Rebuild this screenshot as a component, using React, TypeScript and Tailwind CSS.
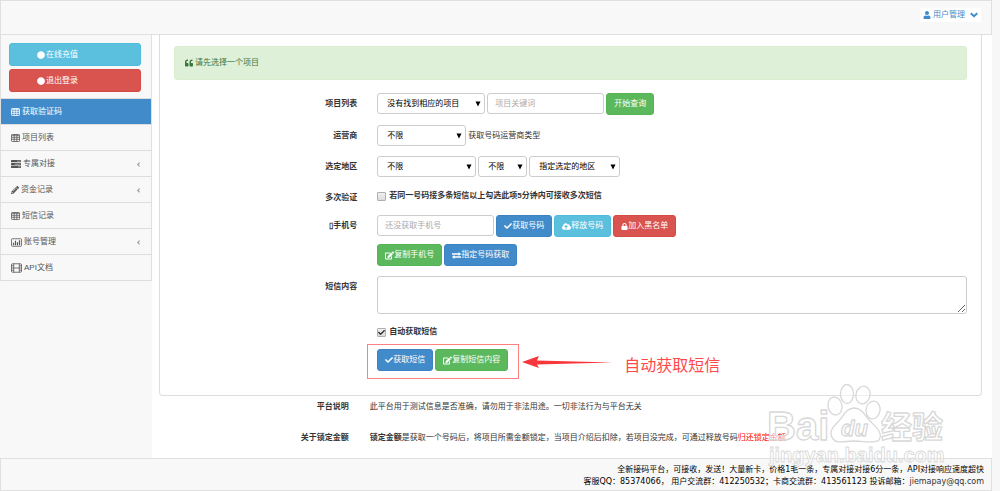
import type { ReactNode } from 'react';
import {
  FaAngleLeft,
  FaCheck,
  FaCircle,
  FaCloudUploadAlt,
  FaEdit,
  FaLock,
  FaPencilAlt,
  FaQuoteLeft,
  FaUser,
} from 'react-icons/fa';

const TableIcon = () => (
  <svg viewBox="0 0 18 16" className="h-2 w-[9px]" fill="none" stroke="currentColor" strokeWidth="1.6">
    <rect x="1" y="1" width="16" height="14" rx="1.5" />
    <path d="M1 2.5h16M1 6.5h16M1 10.5h16M6.3 2v13M11.7 2v13" />
  </svg>
);

const TasksIcon = () => (
  <svg viewBox="0 0 20 16" className="h-2 w-[10px]" fill="currentColor">
    <rect width="20" height="4.5" rx="1" />
    <rect y="5.8" width="20" height="4.5" rx="1" />
    <rect y="11.5" width="20" height="4.5" rx="1" />
    <path d="M12 1.5h6.5v1.5H12zM8 7.3h10.5v1.5H8zM14 13h4.5v1.5H14z" fill="#bbb" />
  </svg>
);

const ChartIcon = () => (
  <svg viewBox="0 0 22 17" className="h-[9px] w-[11px]" fill="none" stroke="currentColor">
    <rect x="1" y="1" width="20" height="15" rx="1.5" strokeWidth="1.6" />
    <path d="M5 14V9M9 14V5M13 14V8M17 14V4" strokeWidth="2.4" />
  </svg>
);

const FilmIcon = () => (
  <svg viewBox="0 0 22 19" className="h-[10px] w-[11px]" fill="none" stroke="currentColor" strokeWidth="1.6">
    <rect x="1" y="1" width="20" height="17" rx="2" />
    <path d="M5.5 1v17M16.5 1v17M5.5 9.5h11M1 5h4.5M1 9.5h4.5M1 14h4.5M16.5 5H21M16.5 9.5H21M16.5 14H21" />
  </svg>
);

const ExchangeIcon = () => (
  <svg viewBox="0 0 18 14" className="h-[7px] w-[9px]" fill="currentColor">
    <path d="M0 2.500h13V0l5 4-5 4V5.500H0zM18 8.500H5V6L0 10l5 4v-2.500h13z" />
  </svg>
);

const ChevronIcon = () => (
  <svg viewBox="0 0 16 12" className="ml-[3px] h-[6px] w-2" fill="none" stroke="currentColor" strokeWidth="4">
    <path d="M1.500 2.500 8 8.500l6.500-6" />
  </svg>
);

const navItems: { label: string; icon: ReactNode; active?: boolean; sub?: boolean }[] = [
  { label: '获取验证码', icon: <TableIcon />, active: true },
  { label: '项目列表', icon: <TableIcon /> },
  { label: '专属对接', icon: <TasksIcon />, sub: true },
  { label: '资金记录', icon: <FaPencilAlt className="size-2" />, sub: true },
  { label: '短信记录', icon: <TableIcon /> },
  { label: '账号管理', icon: <ChartIcon />, sub: true },
  { label: 'API文档', icon: <FilmIcon /> },
];

const tones = {
  primary: 'bg-[#428bca] border-[#3b83c2]',
  info: 'bg-[#5bc0de] border-[#50bcdc]',
  danger: 'bg-[#d9534f] border-[#d64a45]',
  success: 'bg-[#5cb85c] border-[#54b354]',
};

const Button = ({ tone, children }: { tone: keyof typeof tones; children: ReactNode }) => (
  <button type="button" className={`flex h-[22px] items-center rounded-[3px] border px-[7px] text-white ${tones[tone]}`}>
    {children}
  </button>
);

const SideButton = ({ tone, children }: { tone: keyof typeof tones; children: ReactNode }) => (
  <button type="button" className={`flex h-[23px] w-full items-center gap-px rounded-[3px] border pl-[27px] text-white ${tones[tone]}`}>
    <FaCircle className="size-2" />
    {children}
  </button>
);

const Select = ({ id, label, value, width }: { id?: string; label?: string; value: string; width: string }) => (
  <div className={`relative ${width}`}>
    <select id={id} aria-label={label} className="h-[21px] w-full appearance-none rounded-[3px] border border-[#ccc] bg-white pl-[9px] text-black">
      <option>{value}</option>
    </select>
    <svg viewBox="0 0 6 6" className="pointer-events-none absolute top-2 right-1 size-[6px]">
      <path d="M.5.500h5L3 5.500z" fill="#000" />
    </svg>
  </div>
);

const Checkbox = ({ label, checked }: { label: string; checked?: boolean }) => (
  <label className="flex items-center gap-[3px] font-bold">
    <span className="relative size-[9px]">
      <input
        type="checkbox"
        defaultChecked={checked}
        className="peer block size-[9px] appearance-none rounded-[1px] border border-[#b0b0b0] bg-gradient-to-b from-[#f0f0f0] to-[#dcdcdc]"
      />
      <FaCheck className="pointer-events-none absolute top-px left-px hidden size-[7px] text-[#333] peer-checked:block" />
    </span>
    {label}
  </label>
);

const Row = ({ label, htmlFor, children }: { label?: ReactNode; htmlFor?: string; children: ReactNode }) => (
  <div className="-mx-2 flex">
    <div className="w-1/4 pt-[5px] pr-[11px] text-right font-bold">{label && <label htmlFor={htmlFor}>{label}</label>}</div>
    <div className="w-3/4 pr-2 pl-[9px]">{children}</div>
  </div>
);

const Watermark = () => (
  <svg
    viewBox="0 0 190 90"
    className="pointer-events-none absolute right-[50px] bottom-[21px] h-[90px] w-[190px]"
    fill="#fff"
    stroke="#d8d8d8"
    strokeWidth="1.3"
    strokeLinejoin="round"
    fontFamily='"Liberation Sans", "Noto Sans CJK SC", sans-serif'
    fontWeight="700"
  >
    <g fillOpacity=".55">
      <text x="7" y="60" fontSize="40">Bai</text>
      <ellipse cx="75" cy="26" rx="7" ry="9" transform="rotate(-12 75 26)" />
      <ellipse cx="87" cy="14" rx="6.5" ry="9.500" />
      <ellipse cx="103" cy="15" rx="7" ry="9" transform="rotate(14 103 15)" />
      <ellipse cx="113" cy="30" rx="7" ry="9" transform="rotate(10 113 30)" />
      <path d="M94 28c8 0 11 8 17 14s12 11 8 18c-4 4-15 1-25 1s-17 3-21-2c-5-7 0-12 5-17s8-14 16-14z" />
      <text x="81" y="56" fontSize="22" fontStyle="italic">du</text>
      <text x="121" y="58" fontSize="31">经验</text>
      <text x="9" y="82" fontSize="20" strokeWidth=".8">jingyan.baidu.com</text>
    </g>
  </svg>
);

export default function App() {
  return (
    <div className="relative flex min-h-screen bg-[#f7f7f7] pr-2 font-['Liberation_Sans','Noto_Sans_CJK_SC',sans-serif] text-[8px] leading-3 text-[#333]">
      <div className="flex flex-1 flex-col bg-white">
        <header className="flex h-[35px] items-start justify-end border border-[#e0e0e0] bg-[#f8f8f8] pt-[7px] pr-[10px]">
          <a href="#user" className="flex h-[14px] items-center gap-[2px] bg-white px-[3px] text-[#428bca]">
            <FaUser className="size-2" />
            用户管理
            <ChevronIcon />
          </a>
        </header>

        <div className="flex flex-1">
          <aside className="w-[152px] shrink-0 bg-[#f8f8f8]">
            <div className="border-x border-[#e0e0e0]">
              <div className="flex flex-col gap-[3px] pt-2 pr-[10px] pb-[6px] pl-2">
                <SideButton tone="info">在线充值</SideButton>
                <SideButton tone="danger">退出登录</SideButton>
              </div>
              <nav>
                {navItems.map((item) => (
                  <a
                    key={item.label}
                    href="#nav"
                    className={`flex items-center gap-[2px] border-t border-[#ddd] pt-[7px] pr-[9px] pb-[6px] pl-[10px] last:border-b ${
                      item.active ? 'bg-[#428bca] text-white' : 'text-[#555]'
                    }`}
                  >
                    {item.icon}
                    {item.label}
                    {item.sub && <FaAngleLeft className="ml-auto size-[7px] text-[#999]" />}
                  </a>
                ))}
              </nav>
            </div>
          </aside>

          <main className="flex-1 pr-[10px] pl-[7px]">
            <form className="flex flex-col rounded-b border border-t-0 border-[#ddd] px-[14px] pt-[11px] pb-[24px]">
              <div className="mb-[13px] flex h-[34px] items-center gap-[2px] rounded-[3px] border border-[#d9edcf] bg-[#dff0d8] px-[10px] text-[#3c763d]">
                <FaQuoteLeft className="size-2" />
                请先选择一个项目
              </div>

              <div className="flex flex-col gap-[10px]">
                <Row label="项目列表" htmlFor="project">
                  <div className="flex gap-[2px]">
                    <Select id="project" value="没有找到相应的项目" width="w-[108px]" />
                    <input aria-label="项目关键词" placeholder="项目关键词" className="h-[21px] w-[117px] rounded-[3px] border border-[#ccc] px-[7px] placeholder:text-[#aaa]" />
                    <Button tone="success">开始查询</Button>
                  </div>
                </Row>
                <Row label="运营商" htmlFor="carrier">
                  <div className="flex items-center gap-[2px]">
                    <Select id="carrier" value="不限" width="w-[89px]" />
                    获取号码运营商类型
                  </div>
                </Row>
                <Row label="选定地区" htmlFor="province">
                  <div className="flex gap-[2px]">
                    <Select id="province" value="不限" width="w-[99px]" />
                    <Select label="城市" value="不限" width="w-[49px]" />
                    <Select label="地区" value="指定选定的地区" width="w-[91px]" />
                  </div>
                </Row>
                <Row label="多次验证">
                  <div className="py-[3px]">
                    <Checkbox label="若同一号码接多条短信以上勾选此项5分钟内可接收多次短信" />
                  </div>
                </Row>
                <Row label="▯手机号" htmlFor="phone">
                  <div className="flex gap-[2px]">
                    <input id="phone" placeholder="还没获取手机号" className="h-[21px] w-[117px] rounded-[3px] border border-[#ccc] px-[7px] placeholder:text-[#aaa]" />
                    <Button tone="primary"><FaCheck />获取号码</Button>
                    <Button tone="info"><FaCloudUploadAlt className="size-[9px]" />释放号码</Button>
                    <Button tone="danger"><FaLock className="size-[7px]" />加入黑名单</Button>
                  </div>
                  <div className="mt-[7px] flex gap-[2px]">
                    <Button tone="success"><FaEdit className="size-[9px]" />复制手机号</Button>
                    <Button tone="primary"><ExchangeIcon />指定号码获取</Button>
                  </div>
                </Row>
                <Row label="短信内容" htmlFor="message">
                  <textarea id="message" className="block h-[38px] w-full rounded-[3px] border border-[#ccc]" />
                  <div className="mt-3">
                    <Checkbox label="自动获取短信" checked />
                  </div>
                  <div className="relative mt-[11px] flex gap-[2px]">
                    <Button tone="primary"><FaCheck />获取短信</Button>
                    <Button tone="success"><FaEdit className="size-[9px]" />复制短信内容</Button>
                    <div className="pointer-events-none absolute -top-[5px] -left-[10px] flex items-center">
                      <div className="h-[35px] w-[152px] border border-[#ff8080]" />
                      <svg viewBox="0 0 92 14" className="ml-[3px] h-[14px] w-[92px]" fill="#f8373c">
                        <path d="M0 7 17 1 15 5.500 91 7.500 15 9.500 17 13z" />
                      </svg>
                      <span className="ml-[10px] pt-2 text-base leading-5 whitespace-nowrap text-[#ff4a4a]">自动获取短信</span>
                    </div>
                  </div>
                </Row>
              </div>
            </form>

            <dl className="mt-[5px] flex flex-col gap-[19px]">
              <div className="flex">
                <dt className="w-1/4 pr-4 text-right font-bold">平台说明</dt>
                <dd className="w-3/4 pl-[5px]">此平台用于测试信息是否准确，请勿用于非法用途。一切非法行为与平台无关</dd>
              </div>
              <div className="flex">
                <dt className="w-1/4 pr-4 text-right font-bold">关于锁定金额</dt>
                <dd className="w-3/4 pl-[5px]">
                  <b>锁定金额</b>是获取一个号码后，将项目所需金额锁定，当项目介绍后扣除，若项目没完成，可通过释放号码
                  <span className="text-[#f00]">归还锁定金额</span>
                </dd>
              </div>
            </dl>
          </main>
        </div>

        <footer className="h-[33px] border border-[#e0e0e0] bg-[#f8f8f8] pt-[5px] pr-[7px] text-right font-['DejaVu_Sans','Noto_Sans_CJK_SC',sans-serif] text-black">
          <p>全新接码平台，可接收，发送！大量新卡，价格1毛一条，专属对接对接6分一条，API对接响应速度超快</p>
          <p>
            客服QQ：85374066， 用户交流群：412250532；卡商交流群：413561123 投诉邮箱：
            <a href="mailto:jiemapay@qq.com" className="text-[#333]">jiemapay@qq.com</a>
          </p>
        </footer>
      </div>
      <Watermark />
    </div>
  );
}
